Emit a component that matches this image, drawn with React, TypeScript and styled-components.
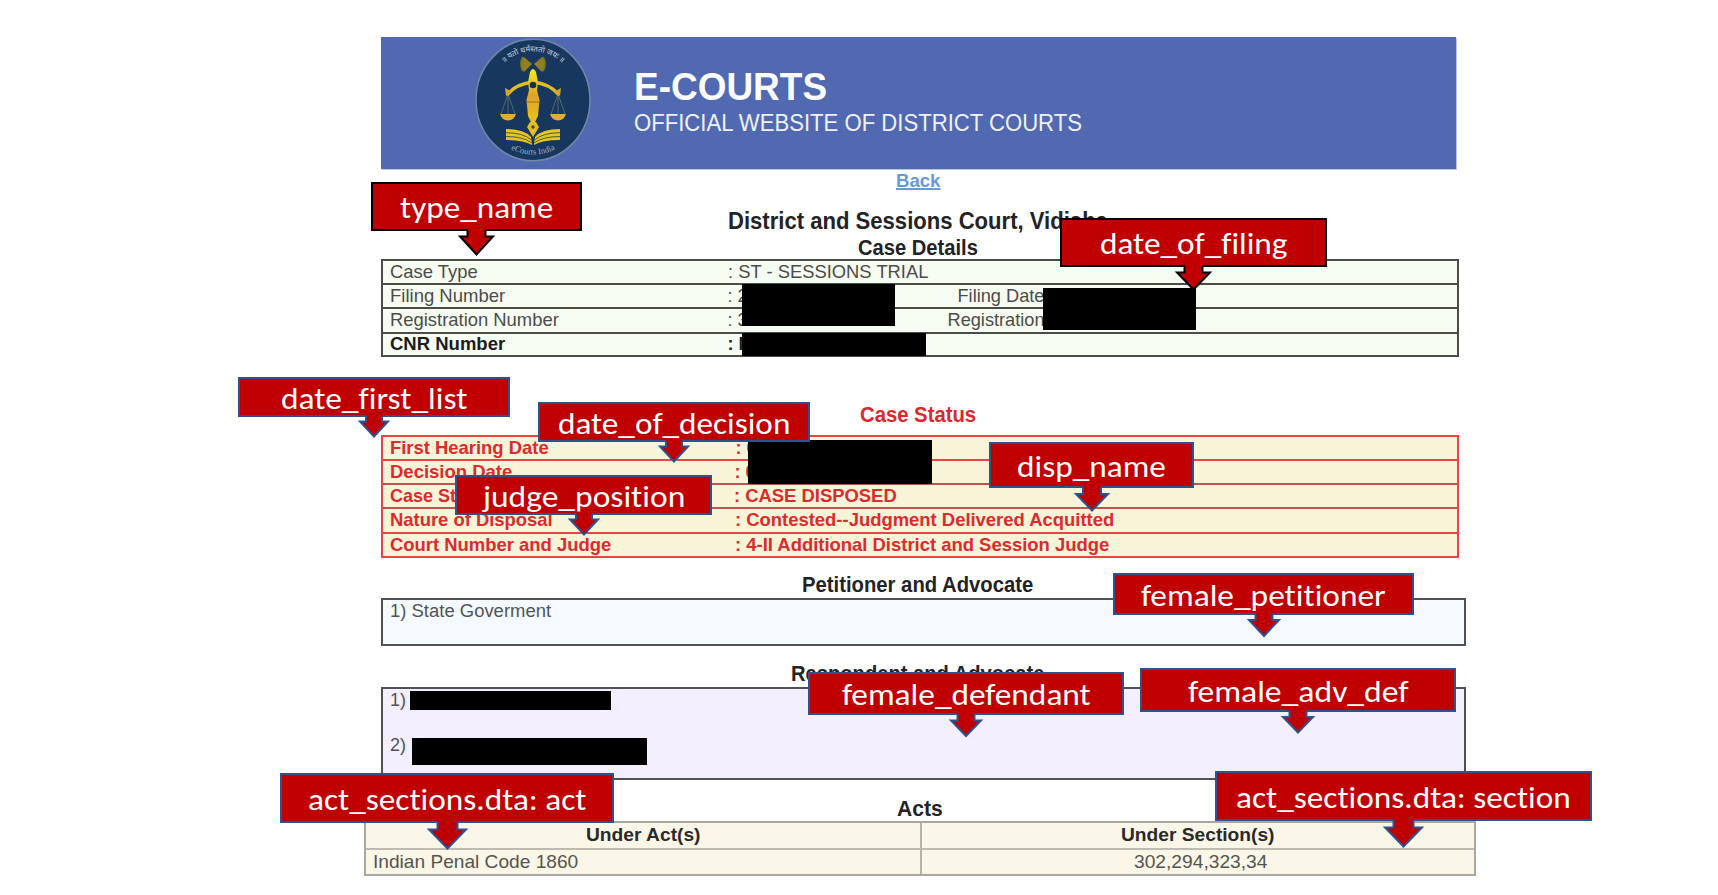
import React, { useLayoutEffect, useRef, useState } from "react";
import styled, { createGlobalStyle } from "styled-components";

const GlobalStyle = createGlobalStyle`
  * { box-sizing: border-box; }
  body {
    margin: 0;
    background: #ffffff;
    font-family: "Liberation Sans", Arial, sans-serif;
  }
`;

const Page = styled.div`
  position: relative;
  width: 1718px;
  height: 895px;
  overflow: hidden;
  background: #ffffff;
`;

const Sheet = styled.main`
  display: flex;
  flex-direction: column;
  align-items: flex-start;
  padding: 37px 0 0 381px;
`;

/* ---------- text squeezed or stretched to a given width ---------- */

const FitBox = styled.span<{ $width: number }>`
  display: inline-block;
  width: ${(p) => p.$width}px;
  white-space: nowrap;
`;

const FitInner = styled.span`
  display: inline-block;
  transform-origin: 0 50%;
`;

function Fit({ width, children }: { width: number; children: React.ReactNode }) {
  const ref = useRef<HTMLSpanElement>(null);
  const [scale, setScale] = useState(1);
  useLayoutEffect(() => {
    if (ref.current) setScale(width / ref.current.offsetWidth);
  }, [width]);
  return (
    <FitBox $width={width}>
      <FitInner ref={ref} style={{ transform: `scaleX(${scale})` }}>
        {children}
      </FitInner>
    </FitBox>
  );
}

/* ---------- banner ---------- */

const Banner = styled.header`
  display: flex;
  align-items: flex-start;
  width: 1075px;
  height: 132px;
  padding-left: 93px;
  background: #5169b1;
  box-shadow: 0 0 1px 0.5px #b9c2df;
`;

const BannerText = styled.div`
  display: flex;
  flex-direction: column;
  padding: 28px 0 0 42px;
  color: #fbfcff;
`;

const SiteName = styled.div`
  height: 44px;
  font-size: 38.5px;
  line-height: 44px;
  font-weight: 700;
`;

const Tagline = styled.div`
  height: 28px;
  font-size: 23.7px;
  line-height: 28px;
  color: #eef1fb;
`;

const Emblem = styled.svg`
  flex: none;
  width: 118px;
  height: 126px;
  margin-top: 1px;
`;

function CourtsEmblem() {
  return (
    <Emblem viewBox="0 0 118 126">
      <defs>
        <path id="arcTop" d="M 14 62.500 A 45 49 0 0 1 104 62.500" />
        <path id="arcBottom" d="M 7.500 62.500 A 51.500 54 0 0 0 110.500 62.500" />
        <linearGradient id="gold" x1="0" y1="0" x2="0" y2="1">
          <stop offset="0" stopColor="#f8ee1c" />
          <stop offset="0.5" stopColor="#dda327" />
          <stop offset="1" stopColor="#e8c41e" />
        </linearGradient>
      </defs>
      <ellipse cx="59" cy="62" rx="57" ry="60.7" fill="#17375f" stroke="#6e86a8" strokeWidth="1.6" />
      <text fontSize="7.800" fill="#c6d0dc" fontFamily='"Noto Sans", "Noto Sans Devanagari", sans-serif' textAnchor="middle">
        <textPath href="#arcTop" startOffset="50%">॥ यतो धर्मस्ततो जयः ॥</textPath>
      </text>
      <text fontSize="8.500" fill="#9fb4c4" fontFamily='"Liberation Serif", serif' textAnchor="middle">
        <textPath href="#arcBottom" startOffset="50%">eCourts India</textPath>
      </text>
      <g fill="#8f7f22">
        <path d="M58 26 L50 19 Q44 25 50 34 Z" />
        <path d="M60 26 L68 19 Q74 25 68 34 Z" />
      </g>
      <g fill="none" stroke="#7d7625" strokeWidth="1.8">
        <path d="M49 19 Q45 26 49 33" />
        <path d="M69 19 Q73 26 69 33" />
      </g>
      <g fill="none" stroke="#5b6f63" strokeWidth="0.9">
        <path d="M34 56 L27 76 M34 56 L41 76 M34 56 V76" />
        <path d="M84 56 L77 76 M84 56 L91 76 M84 56 V76" />
      </g>
      <path
        d="M59 44 Q42 46 34 56 M59 44 Q76 46 84 56"
        fill="none"
        stroke="#e0bd25"
        strokeWidth="3.4"
        strokeLinecap="round"
      />
      <path d="M31 50 L32 58 L38 54 Z M87 50 L86 58 L80 54 Z" fill="#d3a52a" />
      <path d="M56 34 Q59 28 62 34 L64 44 L63 52 L65.500 62 L64 78 L61 84 H57 L54 78 L52.500 62 L55 52 L54 44 Z" fill="url(#gold)" />
      <path d="M52.500 64 H65.500" stroke="#a6781f" strokeWidth="1.2" />
      <path d="M56 84 H62 L65 89 L59 99 L53 89 Z" fill="#e3bd22" />
      <circle cx="59" cy="47" r="3.300" fill="#17324a" />
      <circle cx="59" cy="89" r="1.800" fill="#4c4a20" />
      <path d="M26 76 H42 Q40 82.500 34 82.500 Q28 82.500 26 76 Z M76 76 H92 Q90 82.500 84 82.500 Q78 82.500 76 76 Z" fill="#e5ad2e" />
      <g fill="#e6c524">
        <path d="M32 91 Q50 91 57 99 L58 107 Q50 102 32 102 Z" />
        <path d="M86 91 Q68 91 61 99 L60 107 Q68 102 86 102 Z" />
      </g>
      <g fill="none" stroke="#4f5c35" strokeWidth="1">
        <path d="M32 94.700 Q49 94.700 57.500 102 M32 98.500 Q49 98.500 57.500 104.700" />
        <path d="M86 94.700 Q69 94.700 60.500 102 M86 98.500 Q69 98.500 60.500 104.700" />
      </g>
    </Emblem>
  );
}

/* ---------- headings ---------- */

const BackRow = styled.div`
  height: 24px;
  padding-left: 515px;
  font-size: 18.6px;
  line-height: 23px;
  font-weight: 700;
`;

const BackLink = styled.a`
  color: #6699d8;
  text-decoration: underline;
  text-decoration-thickness: 1.5px;
  text-underline-offset: 1px;
`;

const Heading = styled.h2<{ $left: number; $top: number; $bottom?: number; $size?: number; $red?: boolean }>`
  height: 22px;
  margin: ${(p) => p.$top}px 0 ${(p) => p.$bottom ?? 0}px;
  padding-left: ${(p) => p.$left}px;
  font-size: ${(p) => p.$size ?? 21.5}px;
  line-height: 23px;
  font-weight: 700;
  color: ${(p) => (p.$red ? "#d9292d" : "#222326")};
`;

/* ---------- detail tables ---------- */

const Details = styled.section<{ $line: string; $fill: string; $ink: string }>`
  width: 1078px;
  border: 2px solid ${(p) => p.$line};
  background: ${(p) => p.$fill};
  color: ${(p) => p.$ink};
  font-size: 18.2px;
`;

const DetailRow = styled.div<{ $height: number; $label: number; $line?: string; $bold?: boolean }>`
  display: grid;
  grid-template-columns: ${(p) => p.$label}px 220px 1fr;
  height: ${(p) => p.$height + (p.$line ? 2 : 0)}px;
  padding-left: 6.5px;
  line-height: ${(p) => (p.$height < 22 ? 21 : 23)}px;
  border-bottom: ${(p) => (p.$line ? `2px solid ${p.$line}` : "none")};
  font-weight: ${(p) => (p.$bold ? 700 : 400)};
  color: ${(p) => (p.$bold && p.$label < 340 ? "#1c1c1c" : "inherit")};
  white-space: nowrap;
`;

const SideLabel = styled.span<{ $indent?: number }>`
  padding-left: ${(p) => p.$indent ?? 0}px;
`;

/* ---------- party boxes ---------- */

const PartyBox = styled.section<{ $height: number; $fill: string }>`
  display: flex;
  flex-direction: column;
  gap: 23px;
  width: 1085px;
  height: ${(p) => p.$height}px;
  padding: 0 0 0 7px;
  border: 2px solid #515155;
  background: ${(p) => p.$fill};
  color: #505459;
  font-size: 18px;
  line-height: 22px;
`;

const Party = styled.div``;

/* ---------- acts ---------- */

const ActsTable = styled.section`
  display: grid;
  grid-template-columns: 556px 1fr;
  grid-template-rows: 27px 24px;
  width: 1112px;
  height: 55px;
  margin-left: -17px;
  border: 2px solid #a9a8a0;
  background: #fbf7e8;
  color: #505050;
  font-size: 18.2px;
`;

const ActCell = styled.div<{ $head?: boolean; $first?: boolean; $left: number }>`
  padding-left: ${(p) => p.$left}px;
  line-height: 25px;
  font-weight: ${(p) => (p.$head ? 700 : 400)};
  color: ${(p) => (p.$head ? "#2a2a2c" : "#55544f")};
  border-bottom: ${(p) => (p.$head ? "2px solid #bebcb2" : "none")};
  border-right: ${(p) => (p.$first ? "2px solid #b3b1a8" : "none")};
`;

/* ---------- overlays ---------- */

const Redaction = styled.div<{ $x: number; $y: number; $w: number; $h: number }>`
  position: absolute;
  left: ${(p) => p.$x}px;
  top: ${(p) => p.$y}px;
  width: ${(p) => p.$w}px;
  height: ${(p) => p.$h}px;
  background: #000000;
`;

const CalloutBox = styled.div<{ $x: number; $y: number; $w: number; $h: number; $line: string }>`
  position: absolute;
  left: ${(p) => p.$x}px;
  top: ${(p) => p.$y}px;
  width: ${(p) => p.$w}px;
  height: ${(p) => p.$h}px;
  display: flex;
  align-items: center;
  justify-content: center;
  padding-top: 1px;
  border: 2px solid ${(p) => p.$line};
  background: #c00000;
  color: #ffffff;
  font-family: Carlito, Lato, sans-serif;
  font-size: 31.5px;
  line-height: 32px;
  font-variant-ligatures: none;
`;

const CalloutArrow = styled.svg<{ $x: number; $w: number; $h: number }>`
  position: absolute;
  top: 100%;
  left: ${(p) => p.$x}px;
  width: ${(p) => p.$w}px;
  height: ${(p) => p.$h}px;
  overflow: visible;
`;

interface CalloutData {
  text: string;
  x: number;
  y: number;
  w: number;
  h: number;
  textWidth: number;
  /** arrow centre, half widths of shaft and head, head top and tip, from the box's bottom */
  cx: number;
  shaft: number;
  head: number;
  neck: number;
  tip: number;
  black?: boolean;
}

const callouts: CalloutData[] = [
  { text: "type_name", x: 371, y: 182, w: 211, h: 49, textWidth: 153, cx: 476.5, shaft: 9, head: 17.5, neck: 5.5, tip: 23.5, black: true },
  { text: "date_of_filing", x: 1060, y: 218, w: 267, h: 49, textWidth: 188, cx: 1193.5, shaft: 9, head: 17.5, neck: 5.5, tip: 22.5, black: true },
  { text: "date_first_list", x: 238, y: 377, w: 272, h: 40, textWidth: 186, cx: 374, shaft: 8, head: 15, neck: 4.5, tip: 19.5 },
  { text: "date_of_decision", x: 538, y: 402, w: 272, h: 40, textWidth: 232, cx: 673.5, shaft: 8, head: 15, neck: 4.5, tip: 19.5 },
  { text: "judge_position", x: 455, y: 475, w: 257, h: 40, textWidth: 202, cx: 583.5, shaft: 8, head: 15, neck: 4.5, tip: 19.5 },
  { text: "disp_name", x: 989, y: 442, w: 205, h: 46, textWidth: 149, cx: 1091.5, shaft: 9, head: 17, neck: 6, tip: 22.5 },
  { text: "female_petitioner", x: 1113, y: 573, w: 301, h: 42, textWidth: 245, cx: 1263.5, shaft: 8.5, head: 16, neck: 5, tip: 21 },
  { text: "female_defendant", x: 808, y: 672, w: 316, h: 43, textWidth: 249, cx: 966, shaft: 8.5, head: 16, neck: 5.5, tip: 21 },
  { text: "female_adv_def", x: 1140, y: 668, w: 316, h: 44, textWidth: 220, cx: 1298, shaft: 8.5, head: 16, neck: 5, tip: 20.5 },
  { text: "act_sections.dta: act", x: 280, y: 773, w: 334, h: 50, textWidth: 279, cx: 447, shaft: 10, head: 19.5, neck: 6.5, tip: 25.5 },
  { text: "act_sections.dta: section", x: 1215, y: 771, w: 377, h: 50, textWidth: 335, cx: 1403.5, shaft: 10, head: 19.5, neck: 6.5, tip: 25.5 },
];

function Callout({ text, x, y, w, h, textWidth, cx, shaft, head, neck, tip, black }: CalloutData) {
  const line = black ? "#000000" : "#2f528f";
  const points = [
    [head - shaft, -1],
    [head - shaft, neck],
    [1, neck],
    [head, tip],
    [head * 2 - 1, neck],
    [head + shaft, neck],
    [head + shaft, -1],
  ];
  return (
    <CalloutBox $x={x} $y={y} $w={w} $h={h} $line={line}>
      <Fit width={textWidth}>{text}</Fit>
      <CalloutArrow $x={cx - x - 2 - head} $w={head * 2} $h={tip}>
        <rect x={head - shaft} y={-1.5} width={shaft * 2} height={3.5} fill="#c00000" />
        <polyline
          transform="translate(0 2)"
          points={points.map((p) => p.join(",")).join(" ")}
          fill="#c00000"
          stroke={line}
          strokeWidth="2"
        />
      </CalloutArrow>
    </CalloutBox>
  );
}

const redactions = [
  { x: 742, y: 284, w: 153, h: 42 },
  { x: 742, y: 333, w: 184, h: 23 },
  { x: 1043, y: 288, w: 153, h: 42 },
  { x: 748, y: 440, w: 184, h: 44 },
  { x: 410, y: 691, w: 201, h: 19 },
  { x: 412, y: 738, w: 235, h: 27 },
];

const DARK = "#4a4c4a";
const RED = "#ea4544";
const DIM_RED = "#bd5450";

export default function App() {
  return (
    <Page>
      <GlobalStyle />
      <Sheet>
        <Banner>
          <CourtsEmblem />
          <BannerText>
            <SiteName>
              <Fit width={193}>E-COURTS</Fit>
            </SiteName>
            <Tagline>
              <Fit width={448}>OFFICIAL WEBSITE OF DISTRICT COURTS</Fit>
            </Tagline>
          </BannerText>
        </Banner>
        <BackRow>
          <BackLink>Back</BackLink>
        </BackRow>
        <Heading $left={347} $top={17} $size={23.3}>
          <Fit width={380}>District and Sessions Court, Vidisha</Fit>
        </Heading>
        <Heading $left={477} $top={4} $bottom={1} $size={22}>
          <Fit width={120}>Case Details</Fit>
        </Heading>

        <Details $line={DARK} $fill="#f7fcf2" $ink="#4b4c4a">
          <DetailRow $height={22} $label={338} $line={DARK}>
            <Fit width={88}>Case Type</Fit>
            <Fit width={200}>: ST - SESSIONS TRIAL</Fit>
          </DetailRow>
          <DetailRow $height={22} $label={338} $line={DARK}>
            <Fit width={115}>Filing Number</Fit>
            <span>: 2</span>
            <SideLabel $indent={10}>Filing Date</SideLabel>
          </DetailRow>
          <DetailRow $height={23} $label={338} $line={DARK}>
            <Fit width={169}>Registration Number</Fit>
            <span>: 3</span>
            <SideLabel>Registration</SideLabel>
          </DetailRow>
          <DetailRow $height={21} $label={338} $bold>
            <Fit width={115}>CNR Number</Fit>
            <span>: M</span>
          </DetailRow>
        </Details>

        <Heading $left={479} $top={47} $bottom={9} $red>
          <Fit width={116}>Case Status</Fit>
        </Heading>

        <Details $line={RED} $fill="#f8f4d8" $ink="#dc2b2e">
          <DetailRow $height={22} $label={346} $line={RED} $bold>
            <Fit width={159}>First Hearing Date</Fit>
            <span>: 0</span>
          </DetailRow>
          <DetailRow $height={22} $label={345} $line={DIM_RED} $bold>
            <Fit width={122}>Decision Date</Fit>
            <span>: 0</span>
          </DetailRow>
          <DetailRow $height={22} $label={344} $line={DIM_RED} $bold>
            <Fit width={103}>Case Status</Fit>
            <Fit width={163}>: CASE DISPOSED</Fit>
          </DetailRow>
          <DetailRow $height={23} $label={345} $line={RED} $bold>
            <Fit width={163}>Nature of Disposal</Fit>
            <Fit width={379}>: Contested--Judgment Delivered Acquitted</Fit>
          </DetailRow>
          <DetailRow $height={22} $label={345} $bold>
            <Fit width={221}>Court Number and Judge</Fit>
            <Fit width={374}>: 4-II Additional District and Session Judge</Fit>
          </DetailRow>
        </Details>

        <Heading $left={421} $top={16} $bottom={2}>
          <Fit width={231}>Petitioner and Advocate</Fit>
        </Heading>
        <PartyBox $height={48} $fill="#f4faff">
          <Party>
            <Fit width={161}>1) State Goverment</Fit>
          </Party>
        </PartyBox>

        <Heading $left={410} $top={17} $bottom={2}>
          <Fit width={253}>Respondent and Advocate</Fit>
        </Heading>
        <PartyBox $height={93} $fill="#f4effe">
          <Party>1)</Party>
          <Party>2)</Party>
        </PartyBox>

        <Heading $left={516} $top={18} $bottom={1}>
          <Fit width={46}>Acts</Fit>
        </Heading>
        <ActsTable>
          <ActCell $head $first $left={219.5}>
            <Fit width={114}>Under Act(s)</Fit>
          </ActCell>
          <ActCell $head $left={199}>
            <Fit width={154}>Under Section(s)</Fit>
          </ActCell>
          <ActCell $first $left={6.5}>
            <Fit width={205}>Indian Penal Code 1860</Fit>
          </ActCell>
          <ActCell $left={212}>
            <Fit width={133}>302,294,323,34</Fit>
          </ActCell>
        </ActsTable>
      </Sheet>

      {redactions.map((r) => (
        <Redaction key={`${r.x}-${r.y}`} $x={r.x} $y={r.y} $w={r.w} $h={r.h} />
      ))}
      {callouts.map((c) => (
        <Callout key={c.text} {...c} />
      ))}
    </Page>
  );
}
